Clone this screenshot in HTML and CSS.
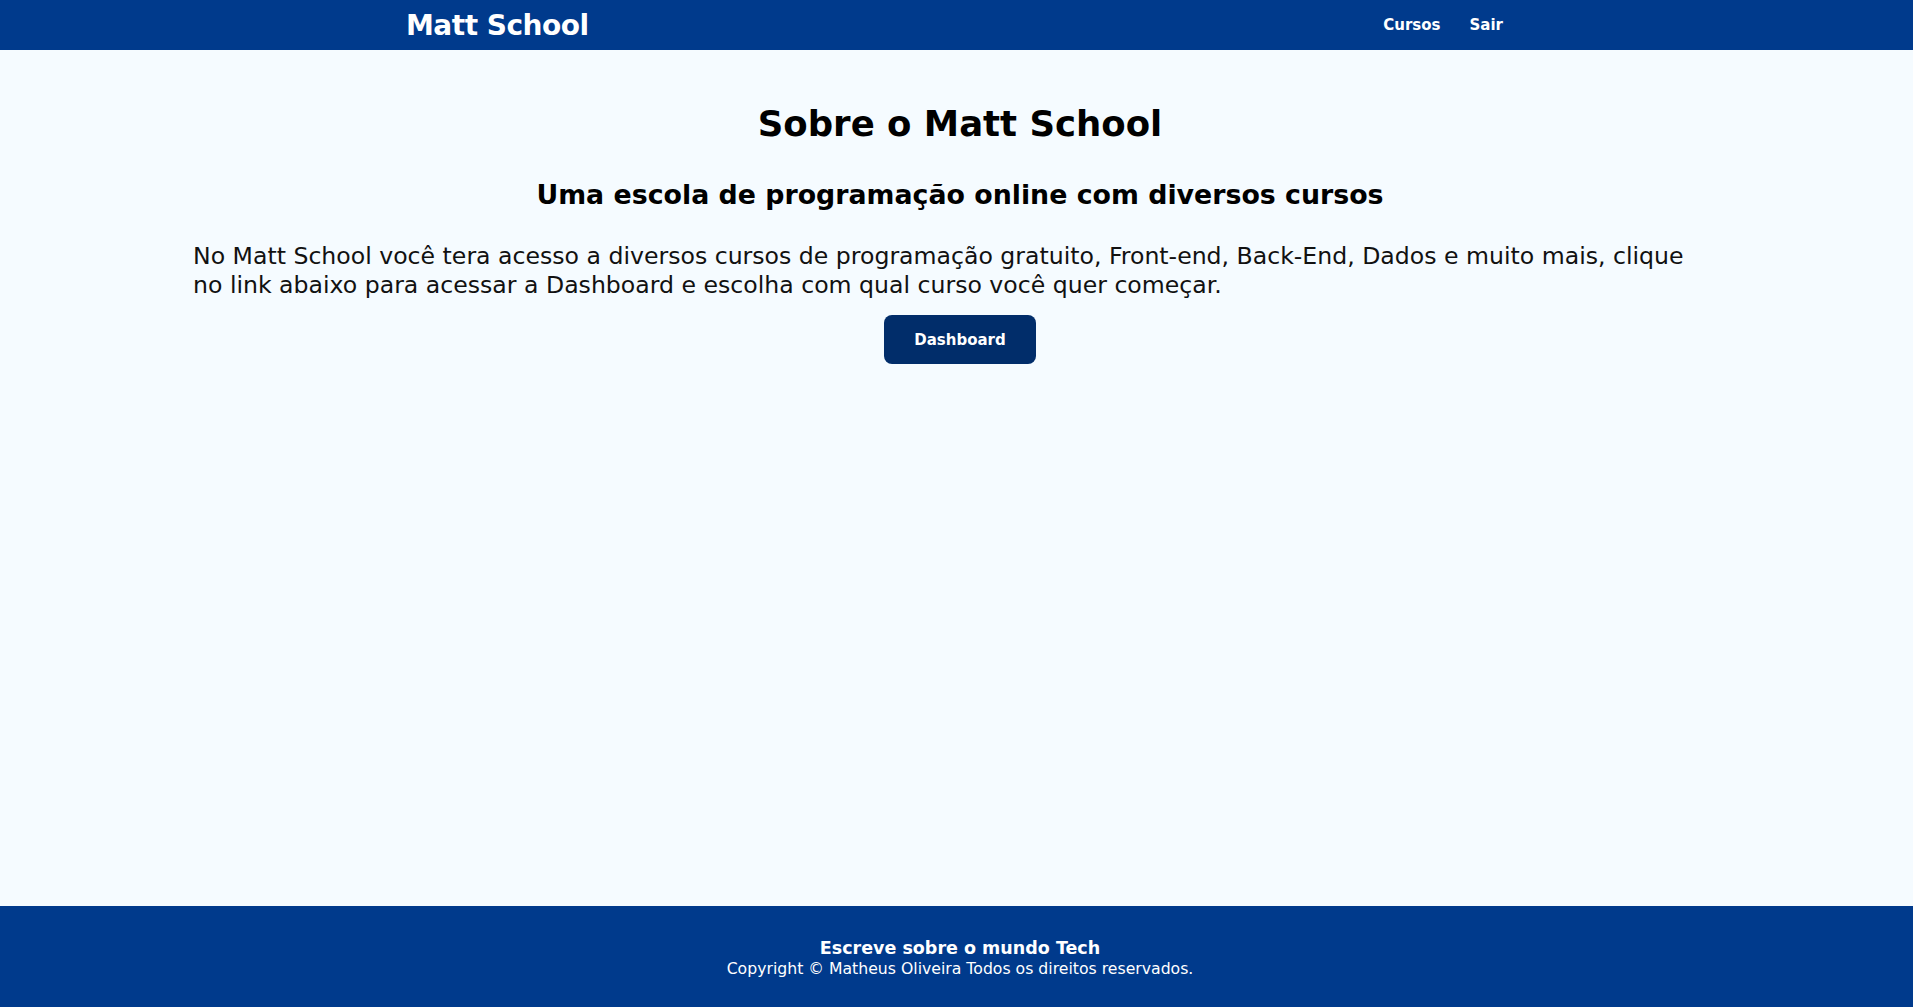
FILE: index.html
```html
<!DOCTYPE html>
<html lang="pt-BR">
<head>
<meta charset="utf-8">
<title>Matt School</title>
<link rel="stylesheet" href="styles.css">
</head>
<body>
<header class="topbar">
  <div class="topbar-inner">
    <a class="logo" href="#">Matt School</a>
    <nav class="nav">
      <a href="#">Cursos</a>
      <a href="#">Sair</a>
    </nav>
  </div>
</header>
<main class="about">
  <h1 class="about-title">Sobre o Matt School</h1>
  <h2 class="about-subtitle">Uma escola de programação online com diversos cursos</h2>
  <p class="about-text">No Matt School você tera acesso a diversos cursos de programação gratuito, Front-end, Back-End, Dados e muito mais, clique no link abaixo para acessar a Dashboard e escolha com qual curso você quer começar.</p>
  <a class="btn" href="#">Dashboard</a>
</main>
<footer class="footer">
  <strong class="footer-title">Escreve sobre o mundo Tech</strong>
  <span class="footer-copy">Copyright © Matheus Oliveira Todos os direitos reservados.</span>
</footer>
</body>
</html>
```
FILE: styles.css
```css
* { box-sizing: border-box; }
html, body { margin: 0; padding: 0; }
body {
  font-family: "DejaVu Sans", "Noto Sans", sans-serif;
  background: #f5fbff;
  color: #000;
  min-height: 100vh;
  display: flex;
  flex-direction: column;
}
a { text-decoration: none; color: inherit; }

.topbar {
  background: #003a8c;
  height: 50px;
  color: #fff;
}
.topbar-inner {
  width: 1107px;
  margin: 0 auto;
  height: 100%;
  display: flex;
  align-items: center;
  justify-content: space-between;
  padding-left: 3px;
}
.logo {
  font-size: 28px;
  font-weight: 700;
  letter-spacing: -0.5px;
}
.nav {
  display: flex;
  gap: 29px;
  padding-right: 7px;
  font-size: 15px;
  font-weight: 700;
}

.about {
  flex: 1;
  width: 1537px;
  margin: 0 auto;
  padding: 51px 0 0 7px;
  display: flex;
  flex-direction: column;
  align-items: center;
}
.about-title {
  margin: 0;
  font-size: 35.5px;
  line-height: 46px;
  font-weight: 700;
}
.about-subtitle {
  margin: 32px 0 0;
  font-size: 26.8px;
  line-height: 32px;
  font-weight: 700;
}
.about-text {
  margin: 31px 20px 0 -2px;
  align-self: stretch;
  font-size: 23.6px;
  line-height: 29px;
  color: #111;
}
.btn {
  margin-top: 15px;
  width: 152px;
  height: 49px;
  border-radius: 8px;
  background: #012d6a;
  color: #fff;
  font-size: 15px;
  font-weight: 700;
  display: flex;
  align-items: center;
  justify-content: center;
}

.footer {
  background: #003a8c;
  color: #fff;
  height: 101px;
  display: flex;
  flex-direction: column;
  align-items: center;
  justify-content: center;
  padding: 4px 0 0 7px;
}
.footer-title {
  font-size: 17.5px;
  line-height: 21px;
  font-weight: 700;
}
.footer-copy {
  font-size: 15.7px;
  line-height: 20px;
}
```
